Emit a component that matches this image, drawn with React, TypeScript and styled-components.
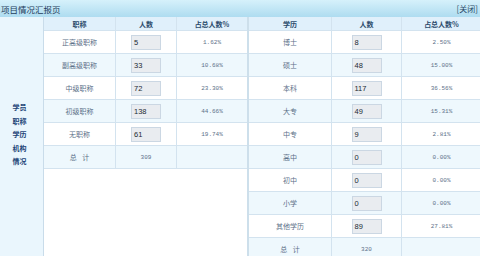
import React from "react";
import styled, { createGlobalStyle } from "styled-components";

interface Stat {
  name: string;
  count: number;
  percent: string;
}

const titleStats: Stat[] = [
  { name: "正高级职称", count: 5, percent: "1.62%" },
  { name: "副高级职称", count: 33, percent: "10.68%" },
  { name: "中级职称", count: 72, percent: "23.30%" },
  { name: "初级职称", count: 138, percent: "44.66%" },
  { name: "无职称", count: 61, percent: "19.74%" },
];

const degreeStats: Stat[] = [
  { name: "博士", count: 8, percent: "2.50%" },
  { name: "硕士", count: 48, percent: "15.00%" },
  { name: "本科", count: 117, percent: "36.56%" },
  { name: "大专", count: 49, percent: "15.31%" },
  { name: "中专", count: 9, percent: "2.81%" },
  { name: "高中", count: 0, percent: "0.00%" },
  { name: "初中", count: 0, percent: "0.00%" },
  { name: "小学", count: 0, percent: "0.00%" },
  { name: "其他学历", count: 89, percent: "27.81%" },
];

const GlobalStyle = createGlobalStyle`
  body {
    margin: 0;
    background: #ffffff;
    font-family: "Noto Sans CJK SC", "Liberation Sans", sans-serif;
  }
`;

const Page = styled.div`
  width: 480px;
  height: 256px;
  overflow: hidden;
  background: #ffffff;
`;

const TitleBar = styled.div`
  height: 17px;
  display: flex;
  align-items: center;
  justify-content: space-between;
  padding: 0 2px 0 1px;
  background: linear-gradient(#d6f1fb, #aedcf0);
  color: #1f3d5c;
  font-size: 8.5px;
`;

const CloseLink = styled.span`
  font-size: 8px;
  color: #2a4a68;
`;

const Body = styled.div`
  display: flex;
  align-items: stretch;
`;

const Sidebar = styled.div`
  width: 44px;
  flex: none;
  border-right: 1px solid #c9dcea;
  background: #eaf6fd;
  display: flex;
  flex-direction: column;
  align-items: center;
  justify-content: center;
  padding: 0 4px 8px 0;
  box-sizing: border-box;
`;

const SideWord = styled.div`
  font-size: 7px;
  font-weight: bold;
  line-height: 13.5px;
  color: #1c4477;
`;

const Block = styled.div<{ $width: number; $edge?: boolean }>`
  width: ${(p) => p.$width}px;
  flex: none;
  border-left: ${(p) => (p.$edge ? "2px solid #cddfeb" : "none")};
`;

const Row = styled.div<{ $cols: string; $alt?: boolean; $head?: boolean }>`
  display: grid;
  grid-template-columns: ${(p) => p.$cols};
  height: ${(p) => (p.$head ? 13 : 22)}px;
  border-bottom: 1px solid #d3e3ef;
  background: ${(p) => (p.$head ? "#e0f0fb" : p.$alt ? "#eef8fd" : "#ffffff")};
`;

const Cell = styled.div`
  display: flex;
  align-items: center;
  justify-content: center;
  border-right: 1px solid #d3e3ef;
  font-size: 7px;
  color: #5d7189;
  &:last-child {
    border-right: none;
  }
`;

const HeadCell = styled(Cell)`
  font-weight: bold;
  color: #2b4b6c;
`;

const CountBox = styled.div`
  width: 30px;
  height: 15px;
  box-sizing: border-box;
  border: 1px solid #cbd7e3;
  background: #e9ecf0;
  padding-left: 2px;
  display: flex;
  align-items: center;
  font-family: "Liberation Sans", sans-serif;
  font-size: 7.5px;
  color: #222a33;
`;

const Percent = styled.span`
  font-family: "Liberation Mono", monospace;
  font-size: 6px;
  color: #5d7189;
`;

const Total = styled.span`
  font-family: "Liberation Mono", monospace;
  font-size: 6px;
  color: #5d7189;
`;

const TotalLabel = styled.span`
  word-spacing: 4px;
`;

const StatTable: React.FC<{
  label: string;
  cols: string;
  rows: Stat[];
  total: number;
}> = ({ label, cols, rows, total }) => (
  <>
    <Row $cols={cols} $head>
      <HeadCell>{label}</HeadCell>
      <HeadCell>人数</HeadCell>
      <HeadCell>占总人数%</HeadCell>
    </Row>
    {rows.map((r, i) => (
      <Row key={r.name} $cols={cols} $alt={i % 2 === 1}>
        <Cell>{r.name}</Cell>
        <Cell>
          <CountBox>{r.count}</CountBox>
        </Cell>
        <Cell>
          <Percent>{r.percent}</Percent>
        </Cell>
      </Row>
    ))}
    <Row $cols={cols} $alt={rows.length % 2 === 1}>
      <Cell>
        <TotalLabel>总 计</TotalLabel>
      </Cell>
      <Cell>
        <Total>{total}</Total>
      </Cell>
      <Cell />
    </Row>
  </>
);

export default function App() {
  return (
    <Page>
      <GlobalStyle />
      <TitleBar>
        <span>项目情况汇报页</span>
        <CloseLink>[关闭]</CloseLink>
      </TitleBar>
      <Body>
        <Sidebar>
          {["学员", "职称", "学历", "机构", "情况"].map((w) => (
            <SideWord key={w}>{w}</SideWord>
          ))}
        </Sidebar>
        <Block $width={203}>
          <StatTable label="职称" cols="72px 61px 1fr" rows={titleStats} total={309} />
        </Block>
        <Block $width={232} $edge>
          <StatTable label="学历" cols="83px 70px 1fr" rows={degreeStats} total={320} />
        </Block>
      </Body>
    </Page>
  );
}
